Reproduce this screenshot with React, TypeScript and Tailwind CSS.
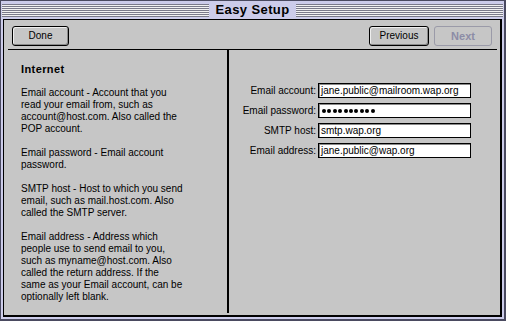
import React from "react";

const stripes =
  "flex-1 h-[13px] bg-[repeating-linear-gradient(to_bottom,#7a7a8a_0px,#7a7a8a_1px,#f2f2f2_1px,#f2f2f2_2px)]";

function Field({ label, value, password }: { label: string; value: string; password?: boolean }) {
  return (
    <div className="flex items-center h-[15px]">
      <div className="w-[77px] text-right pr-[2px] whitespace-nowrap">{label}</div>
      <div className="w-[153px] h-[15px] bg-white border border-black shadow-[inset_1px_1px_0_#8a8a8a] flex items-center pl-[2px] whitespace-nowrap overflow-hidden">
        {password ? (
          <div className="flex gap-[1.4px] pl-[1px]">
            {Array.from({ length: 10 }).map((_, i) => (
              <span key={i} className="block w-[4px] h-[4px] rounded-full bg-black" />
            ))}
          </div>
        ) : (
          value
        )}
      </div>
    </div>
  );
}

export default function App() {
  const font = { fontFamily: '"Liberation Sans", Arial, sans-serif' };
  return (
    <div
      className="w-[506px] h-[321px] bg-[#ccccea] border border-[#4a4a60] border-b-2 border-r-2 flex flex-col text-[10px] leading-[12px] text-black"
      style={font}
    >
      <div className="h-[18px] flex items-center px-[1px]">
        <div className={stripes} />
        <div className="px-[6px] font-bold text-[13px] leading-[16px] tracking-[0.4px] text-black">Easy Setup</div>
        <div className={stripes} />
      </div>
      <div className="flex-1 mx-[2px] mb-[2px] border border-black border-r-2 border-b-2 bg-[#c6c6c6] flex flex-col">
        <div className="flex items-center pt-[6px] px-[8px]">
          <button className="w-[57px] h-[20px] rounded-[3px] border border-black bg-[#c6c6c6] shadow-[inset_1px_1px_0_#eeeeee,inset_-1px_-1px_0_#8a8a8a] text-[10px]">
            Done
          </button>
          <div className="flex-1" />
          <button className="w-[60px] h-[20px] rounded-[3px] border border-black bg-[#c6c6c6] shadow-[inset_1px_1px_0_#eeeeee,inset_-1px_-1px_0_#8a8a8a] text-[10px]">
            Previous
          </button>
          <button className="ml-[5px] w-[58px] h-[20px] rounded-[3px] border border-[#9a9aa8] bg-[#c6c6c6] text-[11px] font-bold text-[#8c8ca6]">
            Next
          </button>
        </div>
        <div className="mt-[3px] ml-[4px] mr-[3px] h-[1px] bg-black" />
        <div className="flex flex-1 mb-[2px]">
          <div className="w-[223px] pl-[17px] pt-[13px] whitespace-nowrap">
            <div className="font-bold text-[11px] tracking-[0.4px]">Internet</div>
            <div className="h-[12px]" />
            <div>Email account - Account that you</div>
            <div>read your email from, such as</div>
            <div>account@host.com. Also called the</div>
            <div>POP account.</div>
            <div className="h-[12px]" />
            <div>Email password - Email account</div>
            <div>password.</div>
            <div className="h-[12px]" />
            <div>SMTP host - Host to which you send</div>
            <div>email, such as mail.host.com. Also</div>
            <div>called the SMTP server.</div>
            <div className="h-[12px]" />
            <div>Email address - Address which</div>
            <div>people use to send email to you,</div>
            <div>such as myname@host.com. Also</div>
            <div>called the return address. If the</div>
            <div>same as your Email account, can be</div>
            <div>optionally left blank.</div>
          </div>
          <div className="w-[2px] bg-black" />
          <div className="flex-1 pl-[12px] pt-[33px] flex flex-col gap-[5px]">
            <Field label="Email account:" value="jane.public@mailroom.wap.org" />
            <Field label="Email password:" value="" password />
            <Field label="SMTP host:" value="smtp.wap.org" />
            <Field label="Email address:" value="jane.public@wap.org" />
          </div>
        </div>
      </div>
    </div>
  );
}
